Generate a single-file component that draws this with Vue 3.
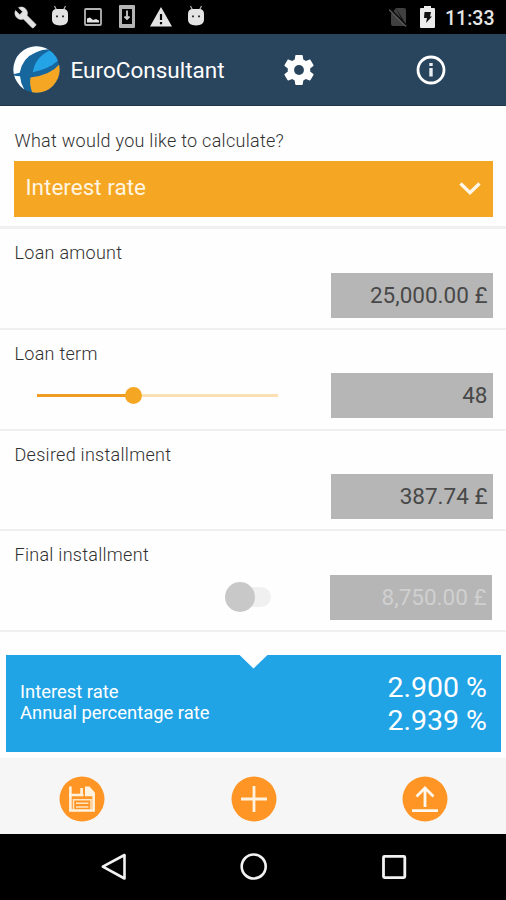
<script setup>
import { ref } from 'vue'

const progress = ref(40)
</script>

<template>
  <div class="screen">
    <div class="status">
      <div class="status-left">
        <svg class="ic wrench" viewBox="0 0 24 24"><path fill="#e4e4e4" stroke="#e4e4e4" stroke-width=".6" d="M22.7 19l-9.1-9.1c.9-2.3.4-5-1.5-6.9-2-2-5-2.400-7.400-1.300L9 6 6 9 1.600 4.700C.4 7.100.9 10.100 2.900 12.100c1.900 1.900 4.600 2.400 6.900 1.500l9.100 9.100c.4.4 1 .4 1.400 0l2.300-2.300c.5-.4.5-1.100.1-1.400z" /></svg>
        <svg class="ic bot" viewBox="0 0 18 22"><path d="M3.500 1l2 4M14.500 1l-2 4" stroke="#aaa" stroke-width="1.300" /><path fill="#e4e4e4" d="M1 9Q1 4 6 4h6q5 0 5 5v6q0 5-8 5.500Q1 20 1 15z" /><path d="M5 11.300h2m4 0h2" stroke="#333" stroke-width="1.800" /></svg>
        <svg class="ic pic" viewBox="0 0 18 22"><rect x="1" y="3" width="16" height="16" rx="1" fill="none" stroke="#b4b4b4" stroke-width="1.800" /><path fill="#e4e4e4" d="M3 16.500v-4l3-1 3 2.500 3-1 3 1.500v2z" /></svg>
        <svg class="ic down" viewBox="0 0 18 24"><path fill="#b4b4b4" fill-rule="evenodd" d="M2 0h14q1 0 1 1v21q0 1-1 1H2q-1 0-1-1V1q0-1 1-1zM4 4v15h10V4z" /><path d="M9 5.500v8M6.500 11.500l2.500 2.500 2.500-2.500" fill="none" stroke="#ccc" stroke-width="1.800" /></svg>
        <svg class="ic warn" viewBox="0 0 22 20"><path fill="#e4e4e4" fill-rule="evenodd" d="M11 0l11 19.500H0zM9.900 7v6h2.200V7zM9.900 15v2.200h2.200V15z" /></svg>
        <svg class="ic bot" viewBox="0 0 18 22"><path d="M3.500 1l2 4M14.500 1l-2 4" stroke="#aaa" stroke-width="1.300" /><path fill="#e4e4e4" d="M1 9Q1 4 6 4h6q5 0 5 5v6q0 5-8 5.500Q1 20 1 15z" /><path d="M5 11.300h2m4 0h2" stroke="#333" stroke-width="1.800" /></svg>
      </div>
      <div class="status-right">
        <svg class="nosim" viewBox="0 0 19 21"><path fill="#404040" d="M7 1h8q2 0 2 2v15zL2 7v10q0 2 2 2h12z" /><path d="M1 2l17 17" stroke="#101010" stroke-width="2" /><path d="M0 2.600l17 17" stroke="#606060" stroke-width="1.200" /></svg>
        <svg class="batt" viewBox="0 0 15 22"><path fill="#ececec" d="M4 0h7v2h3q1 0 1 1v18q0 1-1 1H1q-1 0-1-1V3q0-1 1-1h3z" /><path fill="#111" d="M4.500 6h6.500l-1 4.500h2l-6 6.500 1-5H4z" /></svg>
        <span class="clock">11:33</span>
      </div>
    </div>

    <header class="appbar">
      <svg class="logo" viewBox="0 0 140 140">
        <defs><clipPath id="disc"><circle cx="70" cy="70" r="69" /></clipPath></defs>
        <g clip-path="url(#disc)">
          <rect width="140" height="140" fill="#17679f" />
          <path fill="#fff" d="M0 84Q10 83 20 80Q28 35 66 20Q86 10 112 10V0H0z" />
          <path fill="#fff" d="M0 87Q10 90 21 90Q22 110 34 130L0 140z" />
          <path fill="#24a3e6" d="M110 13Q66 34 59 78Q104 70 134 44L138 20z" />
          <path fill="#f5a623" d="M140 53Q112 87 52 94Q48 116 58 140H140z" />
        </g>
      </svg>
      <h1 class="title">EuroConsultant</h1>
      <svg class="gear" viewBox="2 2 20 20"><path fill="#fff" d="M19.430 12.980c.04-.32.07-.64.07-.98s-.03-.66-.07-.98l2.110-1.650c.19-.15.24-.42.12-.64l-2-3.460c-.12-.22-.39-.3-.61-.22l-2.490 1c-.52-.4-1.080-.73-1.690-.98l-.38-2.650C14.460 2.180 14.250 2 14 2h-4c-.25 0-.46.18-.49.42l-.38 2.650c-.61.25-1.170.59-1.690.98l-2.490-1c-.23-.09-.49 0-.61.22l-2 3.460c-.13.22-.07.49.12.64l2.110 1.650c-.04.32-.07.65-.07.98s.03.66.07.98l-2.110 1.650c-.19.15-.24.42-.12.64l2 3.460c.12.22.39.3.61.22l2.490-1c.52.4 1.080.73 1.690.98l.38 2.650c.03.24.24.42.49.42h4c.25 0 .46-.18.49-.42l.38-2.650c.61-.25 1.170-.59 1.690-.98l2.490 1c.23.09.49 0 .61-.22l2-3.460c.12-.22.07-.49-.12-.64l-2.110-1.650z" /><circle cx="12" cy="12" r="3.300" fill="#29445d" /></svg>
      <svg class="info" viewBox="0 0 30 30"><circle cx="15" cy="15" r="13" fill="none" stroke="#fff" stroke-width="2.800" /><path d="M15 13v8.500" stroke="#e8edf2" stroke-width="3.400" /><path d="M15 8v3" stroke="#e8edf2" stroke-width="3.400" /></svg>
    </header>

    <main class="form">
      <section class="mode">
        <label class="label ask">What would you like to calculate?</label>
        <div class="select">
          <span class="select-text">Interest rate</span>
          <svg class="chev" viewBox="0 0 22 14"><path d="M1.500 1.500L11 10.700l9.500-9.200" fill="none" stroke="#fff8ea" stroke-width="3.400" /></svg>
        </div>
      </section>
      <section class="row">
        <label class="label">Loan amount</label>
        <div class="line"><div class="field">25,000.00 £</div></div>
      </section>
      <section class="row">
        <label class="label">Loan term</label>
        <div class="line">
          <div class="slider">
            <div class="done" :style="{ width: progress + '%' }"></div>
            <div class="knob"></div>
            <div class="rest"></div>
          </div>
          <div class="field">48</div>
        </div>
      </section>
      <section class="row">
        <label class="label">Desired installment</label>
        <div class="line"><div class="field">387.74 £</div></div>
      </section>
      <section class="row">
        <label class="label">Final installment</label>
        <div class="line off">
          <div class="switch"><div class="thumb"></div><div class="track"></div></div>
          <div class="field">8,750.00 £</div>
        </div>
      </section>
    </main>

    <div class="result">
      <div class="names"><span>Interest rate</span><span>Annual percentage rate</span></div>
      <div class="values"><span>2.900 %</span><span>2.939 %</span></div>
    </div>

    <div class="tools">
      <svg class="tool" viewBox="0 0 46 46"><circle cx="23" cy="23" r="22.500" fill="#ff9524" /><path d="M11.400 10.500v24h23.200V18" fill="none" stroke="#fff3e0" stroke-width="2.600" /><path fill="#fff3e0" d="M10.100 17.800h14.400v2.400H10.100zM21.300 12h2.600v6h-2.600zM26 10.500h4.500l5.400 6v3.700H26z" /><path d="M14.500 34v-10.300h17.500V34M17 27.300h12.500M17 31h12.500" fill="none" stroke="#ffe6c4" stroke-width="1.500" /></svg>
      <svg class="tool" viewBox="0 0 46 46"><circle cx="23" cy="23" r="22.500" fill="#ff9524" /><path d="M23 10v26M10 23h26" stroke="#fff3e0" stroke-width="2.800" /></svg>
      <svg class="tool" viewBox="0 0 46 46"><circle cx="23" cy="23" r="22.500" fill="#ff9524" /><path d="M23 31V12.500M14.500 20.500l8.500-8.500 8.500 8.500M10 34.700h26" fill="none" stroke="#fff8ee" stroke-width="2.800" /></svg>
    </div>

    <nav class="nav">
      <svg class="key" viewBox="0 0 28 28"><path d="M24.500 2v23.500L2.800 13.700z" fill="none" stroke="#f2f2f2" stroke-width="2.600" stroke-linejoin="round" /></svg>
      <svg class="key" viewBox="0 0 28 28"><circle cx="13.700" cy="13.500" r="12" fill="none" stroke="#f2f2f2" stroke-width="2.600" /></svg>
      <svg class="key" viewBox="0 0 28 28"><rect x="3.500" y="3.300" width="21.300" height="21.300" rx="1" fill="none" stroke="#f2f2f2" stroke-width="2.800" /></svg>
    </nav>
  </div>
</template>

<style>
body { margin: 0; background: #fff; }
</style>

<style scoped>
* { box-sizing: border-box; }
svg { display: block; flex: none; }
.screen { width: 506px; height: 900px; overflow: hidden; display: flex; flex-direction: column; background: #fefefe; font-family: Roboto, sans-serif; }
.status { height: 34px; flex: none; background: #000; display: flex; justify-content: space-between; }
.status-left { display: flex; align-items: center; padding-left: 14px; }
.wrench { width: 23px; height: 23px; }
.bot { width: 18px; height: 22px; margin-left: 14px; margin-bottom: 3px; }
.pic { width: 18px; height: 22px; margin-left: 15px; }
.down { width: 18px; height: 24px; margin-left: 16px; }
.warn { width: 22px; height: 20px; margin-left: 14px; }
.warn + .bot { margin-left: 15px; }
.status-right { display: flex; align-items: center; padding-right: 11px; }
.nosim { width: 19px; height: 21px; }
.batt { width: 15px; height: 22px; margin-left: 12px; }
.clock { margin-left: 10px; font-size: 19.500px; font-weight: 500; line-height: 34px; padding-top: 3px; color: #e6e6e6; width: 50px; white-space: nowrap; }
.appbar { height: 72px; flex: none; background: #29445d; display: flex; align-items: center; padding-left: 13px; border-bottom: 1px solid #20384d; }
.logo { width: 47px; height: 47px; }
.title { margin: 0 0 0 10.500px; width: 213px; font-size: 22.500px; font-weight: 400; color: #fff; white-space: nowrap; line-height: 30px; }
.gear { width: 30px; height: 30px; }
.info { width: 30px; height: 30px; margin-left: 102px; }
.label { display: block; font-size: 18px; line-height: 22px; font-weight: 300; letter-spacing: .28px; color: #303030; white-space: nowrap; }
.form { flex: none; }
.mode { height: 123px; padding: 24px 13px 0 14.500px; border-bottom: 3px solid #f0f0f0; }
.select { margin: 8.500px 0 0 -.5px; height: 56px; background: #f5a623; display: flex; justify-content: space-between; align-items: center; padding: 0 12px 0 11.500px; }
.select-text { font-size: 22.500px; color: #fff5e0; line-height: 28px; padding-bottom: 4px; }
.chev { width: 22px; height: 14px; margin-top: 1px; }
.row { height: 100.750px; padding: 13px 13.500px 0 14.500px; border-bottom: 2.500px solid #f0f0f0; }
.line { margin-top: 8.500px; height: 45px; display: flex; align-items: center; justify-content: flex-end; }
.field { width: 162px; height: 45px; flex: none; background: #b6b6b6; color: #484848; font-size: 22.500px; line-height: 45px; text-align: right; padding-right: 5px; white-space: nowrap; }
.slider { width: 241px; margin-right: 53px; display: flex; align-items: center; }
.done { height: 2.600px; margin-right: -8px; background: #f09c22; }
.knob { width: 17px; height: 17px; border-radius: 50%; background: #f5a623; flex: none; }
.rest { height: 2.600px; flex: 1; background: #fddfb4; }
.off { padding-right: 1px; }
.off .field { color: #d0d0d0; }
.switch { display: flex; align-items: center; margin-right: 59px; }
.thumb { width: 30px; height: 30px; border-radius: 50%; background: #c8c8c8; z-index: 1; }
.track { width: 31px; height: 20px; border-radius: 10px; background: #f0f0f0; margin-left: -15px; }
.result { margin: 22.500px 5px 0 6px; height: 97.500px; flex: none; background: #21a4e6; clip-path: polygon(0 0, 233px 0, 247.500px 14px, 262px 0, 100% 0, 100% 100%, 0 100%); color: #fff; display: flex; justify-content: space-between; padding: 16px 14px 0; }
.names { display: flex; flex-direction: column; font-size: 18.400px; line-height: 21.500px; padding-top: 10px; }
.values { display: flex; flex-direction: column; text-align: right; font-size: 28.500px; line-height: 33.500px; }
.tools { margin-top: 6px; height: 75.500px; flex: none; background: #f6f6f6; display: flex; justify-content: space-between; padding: 18px 58px 0 59px; }
.tool { width: 46px; height: 46px; }
.nav { flex: 1; background: #000; display: flex; justify-content: space-between; align-items: center; padding: 0 98px 0 99.500px; }
.key { width: 28px; height: 28px; }
</style>
